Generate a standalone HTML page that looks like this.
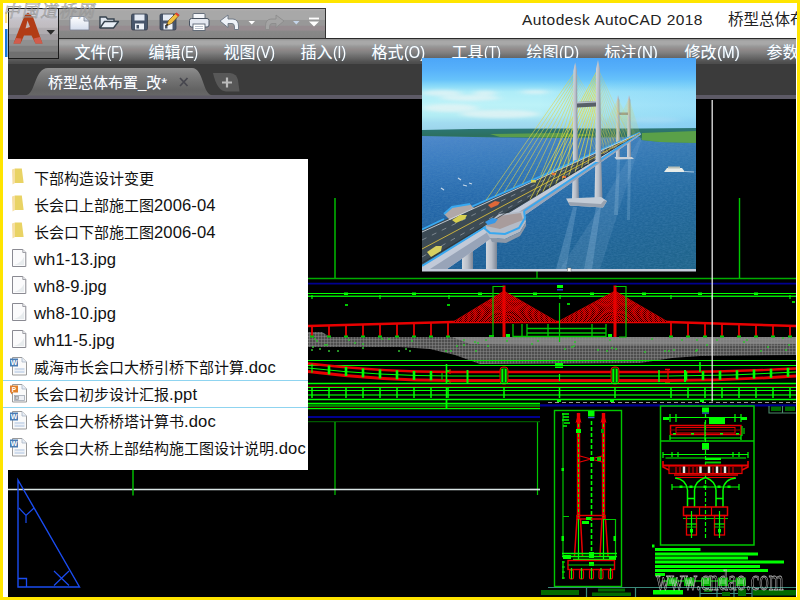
<!DOCTYPE html><html><head><meta charset="utf-8"><title>AutoCAD</title><style>
*{box-sizing:border-box}
html,body{margin:0;padding:0}
body{width:800px;height:600px;overflow:hidden;position:relative;background:#ffe500;font-family:"Liberation Sans","Noto Sans CJK SC",sans-serif;}
#win{position:absolute;left:3px;top:3px;width:794px;height:594px;background:#fff;overflow:hidden}
.abs{position:absolute}
#black{left:5px;top:96px;width:788px;height:498px;background:#000}
#tabbar{left:5px;top:61px;width:788px;height:31px;background:#3b3b3b}
#tabstrip{left:5px;top:92px;width:788px;height:4px;background:#5d5a66}
#menubar{left:5px;top:35px;width:788px;height:26px;background:linear-gradient(#909090 0,#a8a8a8 8%,#a8a8a8 20%,#989898 30%,#908a8a 42%,#808080 55%,#707070 67%,#606060 80%,#505050 92%,#4c4c4c 100%);border-top:1px solid #2a2a2a}
.menu{position:absolute;top:39px;color:#fff;font-size:16px;line-height:22px;white-space:nowrap;text-shadow:0 0 1px rgba(120,200,255,.6)}
#qat{left:55px;top:5px;width:268px;height:30.5px;background:linear-gradient(#b4b0b0 0,#a8a8a8 7%,#a8a8a8 36%,#989898 39%,#989898 56%,#968c90 59%,#968c90 73%,#888 76%,#848484 100%);border:1px solid #333;border-left:none}
#abtn{left:5px;top:5px;width:51px;height:51px;background:linear-gradient(#d0d0d8 0,#d0d0d8 15%,#c8c8d0 17%,#c4c0c6 25%,#c0bcc0 37%,#b0acb0 40%,#b0acb0 50%,#a09ca0 52%,#a09ca0 62%,#909090 64%,#909090 74%,#808080 76%,#808080 86%,#707070 88%,#707070 100%);border:1px solid #1c1c1c}
#title{left:519px;top:7px;font-size:15.5px;letter-spacing:.45px;line-height:20px;color:#222;white-space:nowrap}
#title2{left:725px;top:7px;font-size:15.5px;line-height:20px;color:#222;white-space:nowrap}
#panel{left:0px;top:156px;width:305px;height:311px;background:#fff}
.row{position:absolute;left:31px;font-size:15px;line-height:20px;color:#111;white-space:nowrap}
span.ml{display:inline-block;transform:scaleX(.82);transform-origin:0 50%}
span.rl{font-size:16.6px;letter-spacing:.1px}
#sel{left:0;top:377px;width:305px;height:28px;border-top:1px solid #8fd4f0;border-bottom:1px solid #8fd4f0}
</style></head><body>
<div id="win">
<div class="abs" id="black"></div>
<div class="abs" id="tabbar"></div><div class="abs" id="tabstrip"></div>
<div class="abs" id="menubar"></div>
<div class="menu" style="left:71.5px">文件<span class="ml" style="transform:scaleX(0.8)">(F)</span></div>
<div class="menu" style="left:145.5px">编辑<span class="ml" style="transform:scaleX(0.8)">(E)</span></div>
<div class="menu" style="left:220.5px">视图<span class="ml" style="transform:scaleX(0.89)">(V)</span></div>
<div class="menu" style="left:297.5px">插入<span class="ml" style="transform:scaleX(0.86)">(I)</span></div>
<div class="menu" style="left:368.5px">格式<span class="ml" style="transform:scaleX(0.91)">(O)</span></div>
<div class="menu" style="left:448.5px">工具<span class="ml" style="transform:scaleX(0.83)">(T)</span></div>
<div class="menu" style="left:523.5px">绘图<span class="ml" style="transform:scaleX(0.9)">(D)</span></div>
<div class="menu" style="left:601.5px">标注<span class="ml" style="transform:scaleX(0.94)">(N)</span></div>
<div class="menu" style="left:681.5px">修改<span class="ml" style="transform:scaleX(0.95)">(M)</span></div>
<div class="menu" style="left:763.5px">参数</div>
<div class="abs" id="qat"></div>
<div class="abs" id="abtn"></div>
<div class="abs" id="title">Autodesk AutoCAD 2018</div><div class="abs" id="title2">桥型总体布置</div>
<svg class="abs" style="left:-3px;top:-3px" width="800" height="600" viewBox="0 0 800 600" fill="none">
<defs><pattern id="hatch" width="3" height="3" patternUnits="userSpaceOnUse"><rect width="3" height="3" fill="#4e4e4e"/><path d="M0 0h3M0 0v3" stroke="#8a8a8a" stroke-width="1"/></pattern><pattern id="fan" width="2" height="2" patternUnits="userSpaceOnUse"><rect width="2" height="2" fill="#1a0000"/><path d="M0 2L2 0" stroke="#e00000" stroke-width="1"/></pattern></defs>
<path d="M308 278.5L796 278.5" stroke="#00ac00" stroke-width="1.4" />
<path d="M335 198L335 278" stroke="#00c800" stroke-width="1.4" />
<path d="M739.5 198L739.5 278" stroke="#00c800" stroke-width="1.4" />
<path d="M537 271L537 278" stroke="#00c800" stroke-width="1.2" />
<path d="M308 283.6L796 283.6" stroke="#000090" stroke-width="1.7" />
<path d="M308 293.5L796 293.5" stroke="#00ff00" stroke-width="1" />
<path d="M308 296.2L796 296.2" stroke="#00e000" stroke-width="1.6" />
<path d="M312 295L312 299" stroke="#00ff00" stroke-width="1.2" />
<path d="M380 295L380 299" stroke="#00ff00" stroke-width="1.2" />
<path d="M449 295L449 299" stroke="#00ff00" stroke-width="1.2" />
<path d="M560 295L560 299" stroke="#00ff00" stroke-width="1.2" />
<path d="M671 295L671 299" stroke="#00ff00" stroke-width="1.2" />
<path d="M712 295L712 299" stroke="#00ff00" stroke-width="1.2" />
<path d="M790 295L790 299" stroke="#00ff00" stroke-width="1.2" />
<rect x="344" y="292.5" width="4" height="2.5" fill="#00ff00" stroke="none" stroke-width="1" />
<rect x="412" y="292.5" width="4" height="2.5" fill="#00ff00" stroke="none" stroke-width="1" />
<rect x="478" y="292.5" width="4" height="2.5" fill="#00ff00" stroke="none" stroke-width="1" />
<rect x="533" y="292.5" width="4" height="2.5" fill="#00ff00" stroke="none" stroke-width="1" />
<rect x="590" y="292.5" width="4" height="2.5" fill="#00ff00" stroke="none" stroke-width="1" />
<rect x="642" y="292.5" width="4" height="2.5" fill="#00ff00" stroke="none" stroke-width="1" />
<rect x="698" y="292.5" width="4" height="2.5" fill="#00ff00" stroke="none" stroke-width="1" />
<rect x="754" y="292.5" width="4" height="2.5" fill="#00ff00" stroke="none" stroke-width="1" />
<rect x="345" y="304" width="3" height="2" fill="#00c800" stroke="none" stroke-width="1" />
<rect x="447" y="304" width="3" height="2" fill="#00c800" stroke="none" stroke-width="1" />
<rect x="567" y="303" width="3" height="2" fill="#00c800" stroke="none" stroke-width="1" />
<rect x="792" y="301" width="3" height="2" fill="#00c800" stroke="none" stroke-width="1" />
<path d="M308 332L322 332L330 337L452 337L796 337L796 355L700 356L672 358L640 363L480 364L455 355L430 349L400 347L308 347Z" fill="url(#hatch)"/>
<path d="M452 337L796 337L796 344L560 345L470 344Z" fill="#8c8c8c" opacity=".8"/>
<path d="M611 348h2M695 351h2M668 351h2M324 345h2M767 347h2M746 340h2M537 341h2M573 346h2M316 341h2M445 351h2M681 340h2M696 340h2M609 340h2M311 350h2M411 341h2M785 350h2M450 351h2M571 347h2M409 351h2M644 352h2M743 342h2M485 340h2M381 339h2M456 346h2M312 347h2M474 342h2M706 345h2M463 345h2M651 339h2M782 338h2M673 350h2M319 349h2M487 346h2M314 339h2M398 351h2M405 349h2M760 351h2M477 343h2M564 349h2M362 348h2M696 350h2M328 351h2M354 343h2M606 351h2M475 351h2M574 342h2M463 340h2M348 340h2M644 352h2M388 339h2M788 345h2M506 341h2M597 350h2M531 344h2M337 351h2M326 345h2M716 340h2M664 351h2M615 349h2M362 344h2" stroke="#30c030" stroke-width="1.3"/>
<path d="M308 326L452 322L668 322L796 326" stroke="#e80000" stroke-width="2.6"/>
<path d="M312 325.8888888888889L312 336" stroke="#e80000" stroke-width="1.8" />
<rect x="310" y="335.5" width="4" height="2" fill="#00c800" stroke="none" stroke-width="1" />
<path d="M329 325.4166666666667L329 336" stroke="#e80000" stroke-width="1.8" />
<rect x="327" y="335.5" width="4" height="2" fill="#00c800" stroke="none" stroke-width="1" />
<path d="M346 324.94444444444446L346 336" stroke="#e80000" stroke-width="1.8" />
<rect x="344" y="335.5" width="4" height="2" fill="#00c800" stroke="none" stroke-width="1" />
<path d="M363 324.47222222222223L363 336" stroke="#e80000" stroke-width="1.8" />
<rect x="361" y="335.5" width="4" height="2" fill="#00c800" stroke="none" stroke-width="1" />
<path d="M380 324L380 336" stroke="#e80000" stroke-width="1.8" />
<rect x="378" y="335.5" width="4" height="2" fill="#00c800" stroke="none" stroke-width="1" />
<path d="M397 323.52777777777777L397 336" stroke="#e80000" stroke-width="1.8" />
<rect x="395" y="335.5" width="4" height="2" fill="#00c800" stroke="none" stroke-width="1" />
<path d="M414 323.05555555555554L414 336" stroke="#e80000" stroke-width="1.8" />
<rect x="412" y="335.5" width="4" height="2" fill="#00c800" stroke="none" stroke-width="1" />
<path d="M431 322.5833333333333L431 336" stroke="#e80000" stroke-width="1.8" />
<rect x="429" y="335.5" width="4" height="2" fill="#00c800" stroke="none" stroke-width="1" />
<path d="M448 322.1111111111111L448 336" stroke="#e80000" stroke-width="1.8" />
<rect x="446" y="335.5" width="4" height="2" fill="#00c800" stroke="none" stroke-width="1" />
<path d="M671 322.09375L671 336" stroke="#e80000" stroke-width="1.8" />
<rect x="669" y="335.5" width="4" height="2" fill="#00c800" stroke="none" stroke-width="1" />
<path d="M688 322.625L688 336" stroke="#e80000" stroke-width="1.8" />
<rect x="686" y="335.5" width="4" height="2" fill="#00c800" stroke="none" stroke-width="1" />
<path d="M705 323.15625L705 336" stroke="#e80000" stroke-width="1.8" />
<rect x="703" y="335.5" width="4" height="2" fill="#00c800" stroke="none" stroke-width="1" />
<path d="M722 323.6875L722 336" stroke="#e80000" stroke-width="1.8" />
<rect x="720" y="335.5" width="4" height="2" fill="#00c800" stroke="none" stroke-width="1" />
<path d="M739 324.21875L739 336" stroke="#e80000" stroke-width="1.8" />
<rect x="737" y="335.5" width="4" height="2" fill="#00c800" stroke="none" stroke-width="1" />
<path d="M756 324.75L756 336" stroke="#e80000" stroke-width="1.8" />
<rect x="754" y="335.5" width="4" height="2" fill="#00c800" stroke="none" stroke-width="1" />
<path d="M773 325.28125L773 336" stroke="#e80000" stroke-width="1.8" />
<rect x="771" y="335.5" width="4" height="2" fill="#00c800" stroke="none" stroke-width="1" />
<path d="M790 325.8125L790 336" stroke="#e80000" stroke-width="1.8" />
<rect x="788" y="335.5" width="4" height="2" fill="#00c800" stroke="none" stroke-width="1" />
<path d="M504 291L453 322L557.5 322Z" fill="url(#fan)"/>
<path d="M504 291L453 322" stroke="#e80000" stroke-width="0.7" />
<path d="M504 291L557.5 322" stroke="#e80000" stroke-width="0.7" />
<path d="M504 292L456.3878571428571 322" stroke="#e80000" stroke-width="0.7" />
<path d="M504 292L553.9460714285714 322" stroke="#e80000" stroke-width="0.7" />
<path d="M504 293L459.7757142857143 322" stroke="#e80000" stroke-width="0.7" />
<path d="M504 293L550.3921428571429 322" stroke="#e80000" stroke-width="0.7" />
<path d="M504 294L463.16357142857146 322" stroke="#e80000" stroke-width="0.7" />
<path d="M504 294L546.8382142857142 322" stroke="#e80000" stroke-width="0.7" />
<path d="M504 295L466.5514285714286 322" stroke="#e80000" stroke-width="0.7" />
<path d="M504 295L543.2842857142857 322" stroke="#e80000" stroke-width="0.7" />
<path d="M504 296L469.9392857142857 322" stroke="#e80000" stroke-width="0.7" />
<path d="M504 296L539.7303571428571 322" stroke="#e80000" stroke-width="0.7" />
<path d="M504 297L473.32714285714286 322" stroke="#e80000" stroke-width="0.7" />
<path d="M504 297L536.1764285714286 322" stroke="#e80000" stroke-width="0.7" />
<path d="M504 298L476.715 322" stroke="#e80000" stroke-width="0.7" />
<path d="M504 298L532.6225 322" stroke="#e80000" stroke-width="0.7" />
<path d="M504 299L480.10285714285715 322" stroke="#e80000" stroke-width="0.7" />
<path d="M504 299L529.0685714285714 322" stroke="#e80000" stroke-width="0.7" />
<path d="M504 300L483.49071428571426 322" stroke="#e80000" stroke-width="0.7" />
<path d="M504 300L525.5146428571428 322" stroke="#e80000" stroke-width="0.7" />
<path d="M504 301L486.87857142857143 322" stroke="#e80000" stroke-width="0.7" />
<path d="M504 301L521.9607142857143 322" stroke="#e80000" stroke-width="0.7" />
<path d="M504 302L490.26642857142855 322" stroke="#e80000" stroke-width="0.7" />
<path d="M504 302L518.4067857142857 322" stroke="#e80000" stroke-width="0.7" />
<path d="M504 303L493.6542857142857 322" stroke="#e80000" stroke-width="0.7" />
<path d="M504 303L514.8528571428571 322" stroke="#e80000" stroke-width="0.7" />
<path d="M504 304L497.04214285714284 322" stroke="#e80000" stroke-width="0.7" />
<path d="M504 304L511.2989285714286 322" stroke="#e80000" stroke-width="0.7" />
<path d="M504 305L500.43 322" stroke="#e80000" stroke-width="0.7" />
<path d="M504 305L507.745 322" stroke="#e80000" stroke-width="0.7" />
<path d="M504 285.5L504 337" stroke="#e80000" stroke-width="3" />
<path d="M615 291L557.5 322L668 322Z" fill="url(#fan)"/>
<path d="M615 291L557.5 322" stroke="#e80000" stroke-width="0.7" />
<path d="M615 291L668 322" stroke="#e80000" stroke-width="0.7" />
<path d="M615 292L561.3196428571429 322" stroke="#e80000" stroke-width="0.7" />
<path d="M615 292L664.4792857142858 322" stroke="#e80000" stroke-width="0.7" />
<path d="M615 293L565.1392857142857 322" stroke="#e80000" stroke-width="0.7" />
<path d="M615 293L660.9585714285714 322" stroke="#e80000" stroke-width="0.7" />
<path d="M615 294L568.9589285714286 322" stroke="#e80000" stroke-width="0.7" />
<path d="M615 294L657.4378571428572 322" stroke="#e80000" stroke-width="0.7" />
<path d="M615 295L572.7785714285715 322" stroke="#e80000" stroke-width="0.7" />
<path d="M615 295L653.9171428571428 322" stroke="#e80000" stroke-width="0.7" />
<path d="M615 296L576.5982142857143 322" stroke="#e80000" stroke-width="0.7" />
<path d="M615 296L650.3964285714286 322" stroke="#e80000" stroke-width="0.7" />
<path d="M615 297L580.4178571428572 322" stroke="#e80000" stroke-width="0.7" />
<path d="M615 297L646.8757142857143 322" stroke="#e80000" stroke-width="0.7" />
<path d="M615 298L584.2375 322" stroke="#e80000" stroke-width="0.7" />
<path d="M615 298L643.355 322" stroke="#e80000" stroke-width="0.7" />
<path d="M615 299L588.0571428571428 322" stroke="#e80000" stroke-width="0.7" />
<path d="M615 299L639.8342857142857 322" stroke="#e80000" stroke-width="0.7" />
<path d="M615 300L591.8767857142857 322" stroke="#e80000" stroke-width="0.7" />
<path d="M615 300L636.3135714285714 322" stroke="#e80000" stroke-width="0.7" />
<path d="M615 301L595.6964285714286 322" stroke="#e80000" stroke-width="0.7" />
<path d="M615 301L632.7928571428571 322" stroke="#e80000" stroke-width="0.7" />
<path d="M615 302L599.5160714285714 322" stroke="#e80000" stroke-width="0.7" />
<path d="M615 302L629.2721428571429 322" stroke="#e80000" stroke-width="0.7" />
<path d="M615 303L603.3357142857143 322" stroke="#e80000" stroke-width="0.7" />
<path d="M615 303L625.7514285714286 322" stroke="#e80000" stroke-width="0.7" />
<path d="M615 304L607.1553571428572 322" stroke="#e80000" stroke-width="0.7" />
<path d="M615 304L622.2307142857143 322" stroke="#e80000" stroke-width="0.7" />
<path d="M615 305L610.975 322" stroke="#e80000" stroke-width="0.7" />
<path d="M615 305L618.71 322" stroke="#e80000" stroke-width="0.7" />
<path d="M615 285.5L615 337" stroke="#e80000" stroke-width="3" />
<path d="M504 286.5L493 286.5L493 337" stroke="#00c800" stroke-width="1.2"/>
<path d="M615 286.5L626 286.5L626 337L619 337" stroke="#00c800" stroke-width="1.2"/>
<rect x="489" y="335" width="5" height="2" fill="#00c800" stroke="none" stroke-width="1" />
<rect x="506" y="334" width="4" height="3" fill="#00ff00" stroke="none" stroke-width="1" />
<rect x="608" y="334" width="4" height="3" fill="#00ff00" stroke="none" stroke-width="1" />
<path d="M513 324L513 336.5L606 336.5L606 324M522 324v12M527 324v12M548 324v12M592 324v12M527 328.5H606M527 333H606" stroke="#00c800" stroke-width="1.3"/>
<path d="M559.5 303L559.5 342" stroke="#00c800" stroke-width="1.2" />
<rect x="557" y="285" width="6" height="3" fill="#00ff00" stroke="none" stroke-width="1" />
<rect x="557" y="289" width="6" height="1.5" fill="#2040c0" stroke="none" stroke-width="1" />
<path d="M308 360.5L796 360.5" stroke="#00ff00" stroke-width="1.2" />
<path d="M308 365.5L796 365.5" stroke="#00ff00" stroke-width="1.2" />
<path d="M308 363.5Q380 372 452 372L668 372Q732 372 796 368.5" stroke="#e80000" stroke-width="2.4"/>
<path d="M308 371.5Q380 380.5 452 380.5L668 380.5Q732 380.5 796 376" stroke="#e80000" stroke-width="2.8"/>
<path d="M308 368Q380 376 452 376L668 376Q732 376 796 372" stroke="#00ff00" stroke-width="1"/>
<path d="M312 363.65470679012344L312 372.65470679012344" stroke="#00ff00" stroke-width="1.2" />
<path d="M329 365.4443142361111L329 374.4443142361111" stroke="#00ff00" stroke-width="2.6" />
<path d="M346 367.00256558641973L346 376.00256558641973" stroke="#00ff00" stroke-width="2.6" />
<path d="M363 368.32946084104935L363 377.32946084104935" stroke="#00ff00" stroke-width="2.6" />
<path d="M380 369.425L380 378.425" stroke="#00ff00" stroke-width="2.6" />
<path d="M397 370.2891830632716L397 379.2891830632716" stroke="#00ff00" stroke-width="2.6" />
<path d="M414 370.9220100308642L414 379.9220100308642" stroke="#00ff00" stroke-width="2.6" />
<path d="M431 371.32348090277776L431 380.32348090277776" stroke="#00ff00" stroke-width="2.6" />
<path d="M686 371.416943359375L686 380.416943359375" stroke="#00ff00" stroke-width="2.6" />
<path d="M703 371.18597412109375L703 380.18597412109375" stroke="#00ff00" stroke-width="2.6" />
<path d="M720 370.8068359375L720 379.8068359375" stroke="#00ff00" stroke-width="2.6" />
<path d="M737 370.27952880859374L737 379.27952880859374" stroke="#00ff00" stroke-width="2.6" />
<path d="M754 369.604052734375L754 378.604052734375" stroke="#00ff00" stroke-width="2.6" />
<path d="M771 368.78040771484376L771 377.78040771484376" stroke="#00ff00" stroke-width="2.6" />
<path d="M788 367.80859375L788 376.80859375" stroke="#00ff00" stroke-width="2.6" />
<rect x="500" y="367" width="8" height="17" fill="#006000" stroke="#e80000" stroke-width="1" rx="3"/>
<path d="M502.3 369L502.3 382" stroke="#00ff00" stroke-width="1.6" />
<path d="M505.7 369L505.7 382" stroke="#00ff00" stroke-width="1.6" />
<rect x="611" y="367" width="8" height="17" fill="#006000" stroke="#e80000" stroke-width="1" rx="3"/>
<path d="M613.3 369L613.3 382" stroke="#00ff00" stroke-width="1.6" />
<path d="M616.7 369L616.7 382" stroke="#00ff00" stroke-width="1.6" />
<path d="M446.5 364v19M446.5 371h4M446.5 381h4" stroke="#00ff00" stroke-width="1.6"/>
<path d="M450 369v5M450 379v4" stroke="#e80000" stroke-width="1.2"/>
<path d="M668 369v13M665 369.5h5M665 382h5" stroke="#e80000" stroke-width="1.3"/>
<path d="M659 370L659 382" stroke="#00ff00" stroke-width="1.5" />
<path d="M685 370L685 382" stroke="#00ff00" stroke-width="2" />
<path d="M700 362L700 372" stroke="#00ff00" stroke-width="1.5" />
<path d="M467.5 370L467.5 383" stroke="#00ff00" stroke-width="2" />
<path d="M442 373L442 380" stroke="#00c800" stroke-width="1.2" />
<path d="M431 371L431 380" stroke="#00ff00" stroke-width="2" />
<path d="M559.5 374L559.5 381" stroke="#00ff00" stroke-width="1.2" />
<rect x="555" y="363" width="8" height="2" fill="#00ff00" stroke="none" stroke-width="1" />
<rect x="555" y="366.5" width="8" height="1.5" fill="#00ff00" stroke="none" stroke-width="1" />
<path d="M308 383.5L796 383.5" stroke="#00ff00" stroke-width="1.3" />
<path d="M308 386.3L796 386.3" stroke="#900000" stroke-width="1" />
<path d="M308 387.5L796 387.5" stroke="#00ff00" stroke-width="1" />
<path d="M308 390.5L796 390.5" stroke="#00ff00" stroke-width="1.1" />
<path d="M308 395L796 395" stroke="#00c800" stroke-width="1.5" />
<path d="M308 399.5L796 399.5" stroke="#00ff00" stroke-width="1.5" />
<path d="M308 403.5L540 403.5" stroke="#00ff00" stroke-width="1.4" />
<path d="M308 405.6L540 405.6" stroke="#008800" stroke-width="2.6" />
<path d="M308 407.4L540 407.4" stroke="#500000" stroke-width="0.8" />
<path d="M308 408.6L540 408.6" stroke="#00ff00" stroke-width="1.3" />
<path d="M312 388L312 398" stroke="#00ff00" stroke-width="1.5" />
<path d="M329 388L329 398" stroke="#00ff00" stroke-width="1.5" />
<path d="M346 388L346 398" stroke="#00ff00" stroke-width="1.5" />
<path d="M363 388L363 398" stroke="#00ff00" stroke-width="1.5" />
<path d="M380 388L380 398" stroke="#00ff00" stroke-width="1.5" />
<path d="M397 388L397 398" stroke="#00ff00" stroke-width="1.5" />
<path d="M414 388L414 398" stroke="#00ff00" stroke-width="1.5" />
<path d="M431 388L431 398" stroke="#00ff00" stroke-width="1.5" />
<path d="M448 388L448 398" stroke="#00ff00" stroke-width="1.5" />
<path d="M671 388L671 398" stroke="#00ff00" stroke-width="1.5" />
<path d="M688 388L688 398" stroke="#00ff00" stroke-width="1.5" />
<path d="M705 388L705 398" stroke="#00ff00" stroke-width="1.5" />
<path d="M722 388L722 398" stroke="#00ff00" stroke-width="1.5" />
<path d="M739 388L739 398" stroke="#00ff00" stroke-width="1.5" />
<path d="M756 388L756 398" stroke="#00ff00" stroke-width="1.5" />
<path d="M773 388L773 398" stroke="#00ff00" stroke-width="1.5" />
<path d="M790 388L790 398" stroke="#00ff00" stroke-width="1.5" />
<path d="M446.5 388L446.5 398" stroke="#00ff00" stroke-width="1.5" />
<path d="M504 388L504 398" stroke="#00ff00" stroke-width="1.5" />
<path d="M559.5 388L559.5 398" stroke="#00ff00" stroke-width="1.5" />
<path d="M615 388L615 398" stroke="#00ff00" stroke-width="1.5" />
<path d="M446.5 399L446.5 408" stroke="#00ff00" stroke-width="1.8" />
<path d="M308 417L540 417" stroke="#000090" stroke-width="2" />
<path d="M540 405.3L796 405.3" stroke="#000090" stroke-width="2.2" />
<path d="M548 402.5H796" stroke="#9a9a9a" stroke-width="1" stroke-dasharray="4 3"/>
<path d="M537.5 422L537.5 495" stroke="#00c800" stroke-width="1.2" />
<path d="M308 421.6L540 421.6" stroke="#005800" stroke-width="1.2" />
<path d="M335 422L335 495" stroke="#00c800" stroke-width="1.2" />
<path d="M530 489.5L540 489.5" stroke="#e8e8e8" stroke-width="1.2" />
<rect x="554.5" y="410.5" width="67" height="176" fill="none" stroke="#00c800" stroke-width="1.4" />
<path d="M563 413L563 557" stroke="#00c800" stroke-width="1.2" />
<path d="M562 414h7M563 417h6M562 420h7M564 423h6M563 426h4" stroke="#00ff00" stroke-width="1.4"/>
<rect x="561.5" y="468" width="2.5" height="3" fill="#00ff00" stroke="none" stroke-width="1" />
<rect x="561.5" y="536" width="2.5" height="5" fill="#00ff00" stroke="none" stroke-width="1" />
<path d="M563 516.5L569 516.5" stroke="#00c800" stroke-width="1" />
<rect x="588" y="411" width="6.5" height="5.5" fill="#00ff00" stroke="none" stroke-width="1" />
<rect x="588" y="417" width="6.5" height="1.2" fill="#3060d0" stroke="none" stroke-width="1" />
<path d="M578.5 412.5L575.5 423L578.5 421L581.5 423Z" fill="#e80000"/>
<path d="M578.5 413L578.5 519" stroke="#e80000" stroke-width="3.4" />
<path d="M578.5 424V519" stroke="#00ff00" stroke-width="1" stroke-dasharray="3 2"/>
<path d="M603.5 412.5L600.5 423L603.5 421L606.5 423Z" fill="#e80000"/>
<path d="M603.5 413L603.5 519" stroke="#e80000" stroke-width="3.4" />
<path d="M603.5 424V519" stroke="#00ff00" stroke-width="1" stroke-dasharray="3 2"/>
<rect x="576" y="429" width="5" height="4" fill="#00ff00" stroke="none" stroke-width="1" />
<rect x="601" y="429" width="3" height="4" fill="#009a00" stroke="none" stroke-width="1" />
<path d="M580 456L602 462M580 462L602 456" stroke="#e80000" stroke-width="1.2"/>
<rect x="590" y="457" width="4" height="4" fill="#00ff00" stroke="none" stroke-width="1" />
<rect x="597" y="457" width="4" height="4" fill="#00c800" stroke="none" stroke-width="1" />
<path d="M591.5 421V556" stroke="#00ff00" stroke-width="1.6" stroke-dasharray="4 2"/>
<rect x="577" y="515.5" width="28" height="3.5" fill="none" stroke="#e80000" stroke-width="1.4" />
<path d="M577 519L574.5 556M580.5 519L582.5 556M602 519L600 556M605.5 519L608 556" stroke="#e80000" stroke-width="1.5"/>
<path d="M578.5 519V560M603.5 519V560" stroke="#00ff00" stroke-width="1.2"/>
<path d="M604 519.5H615.5V557" stroke="#00c800" stroke-width="1.2"/>
<rect x="613.5" y="536" width="2.5" height="5" fill="#00ff00" stroke="none" stroke-width="1" />
<rect x="586" y="517" width="5" height="3" fill="#00ff00" stroke="none" stroke-width="1" />
<rect x="582" y="521" width="7" height="3" fill="#00ff00" stroke="none" stroke-width="1" />
<path d="M562 553.5H617M562 556.5H617M573 559.5H610" stroke="#00ff00" stroke-width="1.3"/>
<rect x="563" y="555" width="8" height="4" fill="#00ff00" stroke="none" stroke-width="1" />
<rect x="609" y="556" width="7" height="4" fill="#00ff00" stroke="none" stroke-width="1" />
<rect x="589" y="552" width="5" height="6" fill="#00ff00" stroke="none" stroke-width="1" />
<rect x="589" y="562" width="5" height="4" fill="#00ff00" stroke="none" stroke-width="1" />
<rect x="568" y="560.5" width="46.5" height="9" fill="none" stroke="#e80000" stroke-width="1.4" />
<path d="M568 565L614 565" stroke="#00c800" stroke-width="1" />
<rect x="569.5" y="570" width="4" height="9" fill="none" stroke="#e80000" stroke-width="1.2" rx="1.5"/>
<path d="M571.5 568L571.5 579" stroke="#00ff00" stroke-width="1.2" />
<rect x="579.5" y="570" width="4" height="9" fill="none" stroke="#e80000" stroke-width="1.2" rx="1.5"/>
<path d="M581.5 568L581.5 579" stroke="#00ff00" stroke-width="1.2" />
<rect x="589.5" y="570" width="4" height="9" fill="none" stroke="#e80000" stroke-width="1.2" rx="1.5"/>
<path d="M591.5 568L591.5 579" stroke="#00ff00" stroke-width="1.2" />
<rect x="599" y="570" width="4" height="9" fill="none" stroke="#e80000" stroke-width="1.2" rx="1.5"/>
<path d="M601 568L601 579" stroke="#00ff00" stroke-width="1.2" />
<rect x="608.5" y="570" width="4" height="9" fill="none" stroke="#e80000" stroke-width="1.2" rx="1.5"/>
<path d="M610.5 568L610.5 579" stroke="#00ff00" stroke-width="1.2" />
<path d="M563 561v18M562 562h3M562 567h3M562 572h3M562 578h3" stroke="#00ff00" stroke-width="1.2"/>
<rect x="660.5" y="406" width="93.5" height="139" fill="none" stroke="#00c800" stroke-width="1.5" />
<path d="M660.5 441L754 441" stroke="#00c800" stroke-width="1.5" />
<path d="M705.5 414V540" stroke="#00ff00" stroke-width="1.2" stroke-dasharray="4 2"/>
<rect x="702" y="407.5" width="7" height="5" fill="#00ff00" stroke="none" stroke-width="1" />
<rect x="702" y="412.5" width="7" height="1.2" fill="#3060d0" stroke="none" stroke-width="1" />
<rect x="702" y="443" width="7" height="6" fill="#00ff00" stroke="none" stroke-width="1" />
<rect x="702" y="449" width="7" height="1" fill="#608060" stroke="none" stroke-width="1" />
<path d="M663 417.5H747M670 414v8M676 414v8M735 414v8M741 414v8" stroke="#00ff00" stroke-width="1.2"/>
<rect x="663" y="417" width="6" height="3" fill="#00ff00" stroke="none" stroke-width="1" />
<rect x="741" y="417" width="6" height="3" fill="#00ff00" stroke="none" stroke-width="1" />
<rect x="709" y="417" width="16" height="7" fill="#00ff00" stroke="none" stroke-width="1" />
<rect x="670.5" y="425.5" width="70.5" height="9" fill="none" stroke="#e80000" stroke-width="1.5" />
<rect x="676" y="427.5" width="59" height="5.5" fill="none" stroke="#e80000" stroke-width="1" />
<path d="M670 430L741 430" stroke="#900000" stroke-width="1" />
<path d="M670 438H741M670 435v5M741 435v5M705 422v18" stroke="#00ff00" stroke-width="1.2"/>
<path d="M742 426v10M744 428v6" stroke="#00ff00" stroke-width="1"/>
<rect x="673" y="433" width="3" height="1.6" fill="#00ff00" stroke="none" stroke-width="1" />
<rect x="691" y="433" width="3" height="1.6" fill="#00ff00" stroke="none" stroke-width="1" />
<rect x="720" y="433" width="3" height="1.6" fill="#00ff00" stroke="none" stroke-width="1" />
<rect x="736" y="433" width="3" height="1.6" fill="#00ff00" stroke="none" stroke-width="1" />
<path d="M663 454.5H748M665.5 458H746M663 452v6M748 452v6M672 452v5M678 452v5M733 452v5M739 452v5" stroke="#00ff00" stroke-width="1.2"/>
<rect x="705" y="458" width="16" height="2" fill="#00ff00" stroke="none" stroke-width="1" />
<rect x="705" y="461.5" width="16" height="2" fill="#00c800" stroke="none" stroke-width="1" />
<path d="M663 461V467L669 470M748 461V467L742 470" stroke="#e80000" stroke-width="1.6"/>
<path d="M663 465.5L748 465.5" stroke="#e80000" stroke-width="2.2" />
<rect x="669" y="466" width="73" height="7.5" fill="#200000" stroke="#e80000" stroke-width="1.2" />
<path d="M676 467L676 473" stroke="#e80000" stroke-width="1" />
<path d="M680 467L680 473" stroke="#e80000" stroke-width="1" />
<path d="M689 467L689 473" stroke="#e80000" stroke-width="1" />
<path d="M693 467L693 473" stroke="#e80000" stroke-width="1" />
<path d="M697 467L697 473" stroke="#e80000" stroke-width="1" />
<path d="M709 467L709 473" stroke="#e80000" stroke-width="1" />
<path d="M713 467L713 473" stroke="#e80000" stroke-width="1" />
<path d="M721 467L721 473" stroke="#e80000" stroke-width="1" />
<path d="M729 467L729 473" stroke="#e80000" stroke-width="1" />
<path d="M733 467L733 473" stroke="#e80000" stroke-width="1" />
<rect x="682.8" y="466.5" width="2.4" height="6.5" fill="#e8e8e8" stroke="none" stroke-width="1" />
<rect x="699.3" y="466.5" width="2.4" height="6.5" fill="#e8e8e8" stroke="none" stroke-width="1" />
<rect x="707.8" y="466.5" width="2.4" height="6.5" fill="#e8e8e8" stroke="none" stroke-width="1" />
<rect x="715.8" y="466.5" width="2.4" height="6.5" fill="#e8e8e8" stroke="none" stroke-width="1" />
<rect x="723.8" y="466.5" width="2.4" height="6.5" fill="#e8e8e8" stroke="none" stroke-width="1" />
<path d="M674 475L738 475" stroke="#e80000" stroke-width="1.4" />
<path d="M676 477.5L735 477.5" stroke="#e80000" stroke-width="1.2" />
<path d="M675 478Q686 479 687.5 490M736 478Q724 479 723 490M694.5 490Q695 481 705.5 477.5Q715.5 481 716 490" stroke="#00ff00" stroke-width="1.4"/>
<path d="M672 487H739M672 484v6M739 484v6" stroke="#00ff00" stroke-width="1.2"/>
<rect x="679.5" y="485.5" width="3" height="2.5" fill="#00ff00" stroke="none" stroke-width="1" />
<rect x="689.5" y="485.5" width="3" height="2.5" fill="#00ff00" stroke="none" stroke-width="1" />
<rect x="703.5" y="485.5" width="3" height="2.5" fill="#00ff00" stroke="none" stroke-width="1" />
<rect x="717.5" y="485.5" width="3" height="2.5" fill="#00ff00" stroke="none" stroke-width="1" />
<rect x="727.5" y="485.5" width="3" height="2.5" fill="#00ff00" stroke="none" stroke-width="1" />
<path d="M687.5 490V507M694.5 490V507M716 490V507M723 490V507M687.5 498.5H694.5M716 498.5H723" stroke="#00ff00" stroke-width="1.5"/>
<rect x="683.5" y="507" width="44" height="8.5" fill="none" stroke="#e80000" stroke-width="1.5" />
<path d="M699.5 507L699.5 515.5" stroke="#e80000" stroke-width="1.2" />
<path d="M711.5 507L711.5 515.5" stroke="#e80000" stroke-width="1.2" />
<path d="M683 518.5L728 518.5" stroke="#00c800" stroke-width="1.2" />
<rect x="686.5" y="515.5" width="10" height="19.5" fill="none" stroke="#e80000" stroke-width="1.3" />
<path d="M691.5 511L691.5 538" stroke="#00ff00" stroke-width="1.2" />
<path d="M686.5 524L696.5 524" stroke="#00ff00" stroke-width="1.2" />
<path d="M686.5 527L696.5 527" stroke="#00c800" stroke-width="1" />
<rect x="690" y="529" width="3" height="3.5" fill="#00ff00" stroke="none" stroke-width="1" />
<rect x="714.5" y="515.5" width="10" height="19.5" fill="none" stroke="#e80000" stroke-width="1.3" />
<path d="M719.5 511L719.5 538" stroke="#00ff00" stroke-width="1.2" />
<path d="M714.5 524L724.5 524" stroke="#00ff00" stroke-width="1.2" />
<path d="M714.5 527L724.5 527" stroke="#00c800" stroke-width="1" />
<rect x="718" y="529" width="3" height="3.5" fill="#00ff00" stroke="none" stroke-width="1" />
<rect x="655" y="548" width="45.5" height="3" fill="#00ff00" stroke="none" stroke-width="1" />
<rect x="655" y="552.5" width="103" height="3" fill="#00ff00" stroke="none" stroke-width="1" />
<rect x="655" y="556.5" width="93" height="3" fill="#00ff00" stroke="none" stroke-width="1" />
<rect x="655" y="560.5" width="129" height="3" fill="#00ff00" stroke="none" stroke-width="1" />
<rect x="655" y="565" width="105" height="3" fill="#00ff00" stroke="none" stroke-width="1" />
<rect x="655" y="569" width="113" height="3" fill="#00ff00" stroke="none" stroke-width="1" />
<rect x="655" y="573" width="10" height="3" fill="#00ff00" stroke="none" stroke-width="1" />
<rect x="652" y="544.5" width="2.5" height="3" fill="#00ff00" stroke="none" stroke-width="1" />
<rect x="663" y="580.3" width="83" height="1.4" fill="#00c800" stroke="none" stroke-width="1" />
<rect x="667" y="577.5" width="10" height="8.5" fill="#00b000" stroke="none" stroke-width="1" />
<rect x="669" y="579.5" width="6" height="4.5" fill="#40d040" stroke="none" stroke-width="1" />
<rect x="684" y="577.5" width="10" height="8.5" fill="#00b000" stroke="none" stroke-width="1" />
<rect x="686" y="579.5" width="6" height="4.5" fill="#40d040" stroke="none" stroke-width="1" />
<rect x="701" y="577.5" width="10" height="8.5" fill="#00b000" stroke="none" stroke-width="1" />
<rect x="703" y="579.5" width="6" height="4.5" fill="#40d040" stroke="none" stroke-width="1" />
<rect x="718" y="577.5" width="10" height="8.5" fill="#00b000" stroke="none" stroke-width="1" />
<rect x="720" y="579.5" width="6" height="4.5" fill="#40d040" stroke="none" stroke-width="1" />
<rect x="736" y="577.5" width="10" height="8.5" fill="#00b000" stroke="none" stroke-width="1" />
<rect x="738" y="579.5" width="6" height="4.5" fill="#40d040" stroke="none" stroke-width="1" />
<rect x="653" y="590" width="30" height="4.5" fill="#00ff00" stroke="none" stroke-width="1" />
<path d="M548 587.5H796M586.5 587.5V597M635.5 587.5V597M700 587.5V597M717 587.5V597M734 587.5V597M752 587.5V597M700 593.5H752" stroke="#3a8a7a" stroke-width="1.2"/>
<rect x="541" y="590" width="38" height="5" fill="#006a00" stroke="none" stroke-width="1" />
<rect x="592" y="592.5" width="39" height="3.5" fill="#006a00" stroke="none" stroke-width="1" />
<rect x="598" y="588.5" width="27" height="3" fill="#006a00" stroke="none" stroke-width="1" />
<rect x="753" y="590" width="43" height="5.5" fill="#006a00" stroke="none" stroke-width="1" />
<rect x="704" y="589" width="8" height="3" fill="#006a00" stroke="none" stroke-width="1" />
<rect x="722" y="592" width="8" height="4" fill="#006a00" stroke="none" stroke-width="1" />
<rect x="738" y="589" width="8" height="7" fill="#006a00" stroke="none" stroke-width="1" />
<path d="M769 406V413H796M782.5 406V413" stroke="#4a8a6a" stroke-width="1.1"/>
<rect x="771" y="406.5" width="10" height="4.5" fill="#006a00" stroke="none" stroke-width="1" />
<rect x="785" y="406.5" width="10" height="4.5" fill="#006a00" stroke="none" stroke-width="1" />
<rect x="557" y="399" width="4" height="3" fill="#00ff00" stroke="none" stroke-width="1" />
<rect x="610" y="399" width="4" height="3" fill="#00ff00" stroke="none" stroke-width="1" />
<rect x="700" y="399" width="4" height="3" fill="#00ff00" stroke="none" stroke-width="1" />
<path d="M8 489.5L540 489.5" stroke="#d8e4e4" stroke-width="1.4" />
<path d="M712.2 100L712.2 401.5" stroke="#e8e8e8" stroke-width="1.3" />
<path d="M133 469L133 495.5" stroke="#00c800" stroke-width="1.4" />
<path d="M18 480V587H79.5Z" stroke="#1a4cf0" stroke-width="1.4"/>
<path d="M18 578.5H26.5V587" stroke="#1a4cf0" stroke-width="1.3"/>
<path d="M19 508L26 515.5L34 508M26 515.5V523" stroke="#1a4cf0" stroke-width="1.2"/>
<path d="M54 571L69 585.5M54 585.5L69 571" stroke="#1a4cf0" stroke-width="1.2"/>
</svg>
<svg class="abs" style="left:419px;top:55px" width="274" height="213.5" viewBox="422 58 274 213.5">
<defs>
<linearGradient id="sky" x1="0" y1="0" x2="0" y2="1">
<stop offset="0" stop-color="#4ca6f8"/><stop offset=".15" stop-color="#56b0fa"/><stop offset=".3" stop-color="#66c2fa"/><stop offset=".38" stop-color="#86d8f8"/><stop offset=".47" stop-color="#aeecf8"/><stop offset=".65" stop-color="#bcf2f8"/><stop offset=".8" stop-color="#b2ecf4"/><stop offset=".9" stop-color="#a2dcf0"/><stop offset="1" stop-color="#9cd4ec"/></linearGradient>
<linearGradient id="water" x1="0" y1="0" x2="0" y2="1">
<stop offset="0" stop-color="#4e88cc"/><stop offset=".2" stop-color="#3c7cc2"/><stop offset=".5" stop-color="#2464ac"/><stop offset="1" stop-color="#154e90"/></linearGradient>
<linearGradient id="waterR" x1="0" y1="0" x2="1" y2="1">
<stop offset="0" stop-color="#2a78b0" stop-opacity="0"/><stop offset="1" stop-color="#1f6688" stop-opacity=".9"/></linearGradient>
<linearGradient id="skyR" x1="0" y1="0" x2="1" y2="0"><stop offset="0" stop-color="#6cc4fa" stop-opacity="0"/><stop offset=".5" stop-color="#6cc4fa" stop-opacity=".3"/><stop offset="1" stop-color="#6cc4fa" stop-opacity=".42"/></linearGradient>
<linearGradient id="land" x1="0" y1="0" x2="0" y2="1">
<stop offset="0" stop-color="#2c7676"/><stop offset=".5" stop-color="#2c7060"/><stop offset="1" stop-color="#3a8468"/></linearGradient>
<linearGradient id="col" x1="0" y1="0" x2="1" y2="0">
<stop offset="0" stop-color="#d4d8de"/><stop offset=".5" stop-color="#b8bec8"/><stop offset="1" stop-color="#7c8696"/></linearGradient>
<filter id="wn" x="0" y="0" width="100%" height="100%"><feTurbulence type="fractalNoise" baseFrequency=".35 .9" numOctaves="2" seed="4"/><feColorMatrix values="0 0 0 0 .1  0 0 0 0 .3  0 0 0 0 .55  0 0 0 .9 -.25"/></filter>
<filter id="cl" x="-20%" y="-80%" width="140%" height="260%"><feGaussianBlur stdDeviation="4 1.6"/></filter>
</defs>
<rect x="422" y="58" width="274" height="72" fill="url(#sky)"/>
<g filter="url(#cl)" fill="#eaf4f4" opacity=".7"><ellipse cx="442" cy="93" rx="20" ry="3"/><ellipse cx="470" cy="98" rx="30" ry="3"/><ellipse cx="485" cy="93" rx="12" ry="2.5"/><ellipse cx="450" cy="108" rx="28" ry="4"/><ellipse cx="500" cy="114" rx="40" ry="4"/><ellipse cx="535" cy="92" rx="14" ry="2"/><ellipse cx="655" cy="120" rx="26" ry="3" opacity=".5"/></g>
<rect x="540" y="80" width="156" height="50" fill="url(#skyR)"/>
<rect x="422" y="136" width="274" height="133" fill="url(#water)"/>
<rect x="422" y="136" width="274" height="133" fill="url(#waterR)"/>
<rect x="422" y="136" width="274" height="133" filter="url(#wn)" opacity=".55"/>
<path d="M422 130L470 129L560 128.5L640 128.5L696 128L696 143L660 142L641 140L640 137L560 138L500 137.5L422 136Z" fill="url(#land)"/>
<path d="M642 133L696 131L696 143L660 142L642 140Z" fill="#5aa048"/>
<path d="M490 134L560 133L600 135L560 137.5L500 137Z" fill="#5a9c4c"/>
<path d="M573 207L577 207L566 269L556 269Z M596 207L601 207L592 269L584 269Z" fill="#b8d8f0" opacity=".22"/>
<path d="M640 138L600 207L560 269L600 269L622 200L642 138Z" fill="#a8c8e8" opacity=".13"/>
<path d="M617 159L620 159L618 215L614 215ZM628 159L631 159L630 220L627 220Z" fill="#c0dcf0" opacity=".2"/>
<path d="M616.7 100L618 95L619.3 100L620 157L616 157Z" fill="url(#col)"/>
<path d="M627.7 100L629 95L630.3 100L631 157L627 157Z" fill="url(#col)"/>
<rect x="619" y="112.5" width="9" height="2.5" fill="#8a929c"/>
<path d="M614.5 157L632 157L634 159L616 159.5Z" fill="#c8d0d8"/>
<path d="M618 99L592 154M629 99L604 151.5" stroke="#d8d050" stroke-width=".5" opacity=".45"/>
<path d="M618 99L636 136M629 99L640 134.5" stroke="#d8d050" stroke-width=".5" opacity=".35"/>
<path d="M618 101L595.5 151.8M629 101L607.2 149.5" stroke="#d8d050" stroke-width=".5" opacity=".45"/>
<path d="M618 101L634.5 135.7M629 101L638.8 134.5" stroke="#d8d050" stroke-width=".5" opacity=".35"/>
<path d="M618 103L599 149.6M629 103L610.4 147.5" stroke="#d8d050" stroke-width=".5" opacity=".45"/>
<path d="M618 103L633 135.4M629 103L637.6 134.5" stroke="#d8d050" stroke-width=".5" opacity=".35"/>
<path d="M618 105L602.5 147.4M629 105L613.6 145.5" stroke="#d8d050" stroke-width=".5" opacity=".45"/>
<path d="M618 105L631.5 135.1M629 105L636.4 134.5" stroke="#d8d050" stroke-width=".5" opacity=".35"/>
<path d="M618 107L606 145.2M629 107L616.8 143.5" stroke="#d8d050" stroke-width=".5" opacity=".45"/>
<path d="M618 107L630 134.8M629 107L635.2 134.5" stroke="#d8d050" stroke-width=".5" opacity=".35"/>
<path d="M618 109L609.5 143M629 109L620 141.5" stroke="#d8d050" stroke-width=".5" opacity=".45"/>
<path d="M618 109L628.5 134.5M629 109L634 134.5" stroke="#d8d050" stroke-width=".5" opacity=".35"/>
<path d="M618 111L613 140.8M629 111L623.2 139.5" stroke="#d8d050" stroke-width=".5" opacity=".45"/>
<path d="M618 111L627 134.2M629 111L632.8 134.5" stroke="#d8d050" stroke-width=".5" opacity=".35"/>
<path d="M573 150L578 150L579 199L572 199Z" fill="url(#col)"/>
<path d="M595.5 150L601 150L602.5 201L594.5 201Z" fill="url(#col)"/>
<path d="M566 198.5L601 197L607 201L603 207.5L570 205.5Z" fill="#c4ccd6"/>
<path d="M570 205.5L603 207.5L607 201L604 200.5L601 204L568 202Z" fill="#98a2b0"/>
<rect x="486" y="236" width="11" height="33" fill="url(#col)"/>
<rect x="462" y="249" width="11" height="20" fill="url(#col)"/>
<path d="M422 266L640 132.5L641 134.5L447 269L422 269Z" fill="#c2cad8"/>
<path d="M430 269L447 269L641 134.5L640.5 134Z" fill="#98a4b8"/>
<path d="M422 230L640 133L422 266Z" fill="#3c4a54"/>
<path d="M483 227L499 214L524 211L526 222L520 232L505 239L490 238Z" fill="#b4bcc8"/>
<path d="M490 238L505 239L520 232L526 222L526 226L520 236L506 243L492 242Z" fill="#8c98a8"/>
<path d="M486 226L500 216L521 213L523 220L500 229Z" fill="#a89c9c"/>
<path d="M444 214L452 207L470 204L474 208L450 220Z" fill="#b0a8a8"/>
<path d="M444 214L452 207L470 204" stroke="#38a8f0" stroke-width="2" fill="none"/>
<path d="M483 227L490 233L505 234L519 228L525 218L524 211" stroke="#38a8f0" stroke-width="2" fill="none"/>
<path d="M422 229.5L444 219M472 206.5L640 132.5" stroke="#38a8f0" stroke-width="1.8" fill="none"/>
<path d="M422 232L640 133" stroke="#dfe6ee" stroke-width=".8" fill="none"/>
<path d="M422 266L486 226.5M524 211L640 133" stroke="#38a8f0" stroke-width="2" fill="none"/>
<path d="M422 263L640 133" stroke="#20282c" stroke-width="1" fill="none" opacity=".6"/>
<path d="M422 249L640 133" stroke="#c8b040" stroke-width="1" fill="none"/>
<path d="M422 240L640 133M422 257L640 133" stroke="#a8b0b8" stroke-width=".6" stroke-dasharray="5 6" fill="none"/>
<path d="M427 252L436 246L442 246L441 251L431 257Z" fill="#d8d060"/>
<path d="M452 220L460 215L467 215L465 219L456 223Z" fill="#d8d050"/>
<path d="M488 205L495 201L500 202L498 205L491 208Z" fill="#e06838"/>
<path d="M485 222L492 218L498 219L495 223L488 225Z" fill="#3898e8"/>
<rect x="531" y="180" width="5" height="2.5" fill="#d8d050"/><rect x="552" y="173" width="4" height="2" fill="#e06838"/><rect x="562" y="176" width="4" height="2" fill="#e06838"/>
<path d="M575 72L486 200.2" stroke="#e0d44a" stroke-width=".7" opacity=".85"/>
<path d="M598 69L530 199.6" stroke="#e8dc40" stroke-width=".8" opacity=".9"/>
<path d="M575 72L616 139.1" stroke="#d8cc58" stroke-width=".5" opacity=".6"/>
<path d="M598 69L630 138.1" stroke="#d8cc58" stroke-width=".5" opacity=".65"/>
<path d="M575 75.3L495.1 196.1" stroke="#e0d44a" stroke-width=".7" opacity=".85"/>
<path d="M598 72.3L536.4 195.7" stroke="#e8dc40" stroke-width=".8" opacity=".9"/>
<path d="M575 75.3L613.6 140.2" stroke="#d8cc58" stroke-width=".5" opacity=".6"/>
<path d="M598 72.3L627.1 139.9" stroke="#d8cc58" stroke-width=".5" opacity=".65"/>
<path d="M575 78.7L504.2 192" stroke="#e0d44a" stroke-width=".7" opacity=".85"/>
<path d="M598 75.7L542.9 191.7" stroke="#e8dc40" stroke-width=".8" opacity=".9"/>
<path d="M575 78.7L611.1 141.3" stroke="#d8cc58" stroke-width=".5" opacity=".6"/>
<path d="M598 75.7L624.2 141.7" stroke="#d8cc58" stroke-width=".5" opacity=".65"/>
<path d="M575 82L513.3 187.9" stroke="#e0d44a" stroke-width=".7" opacity=".85"/>
<path d="M598 79L549.3 187.7" stroke="#e8dc40" stroke-width=".8" opacity=".9"/>
<path d="M575 82L608.7 142.4" stroke="#d8cc58" stroke-width=".5" opacity=".6"/>
<path d="M598 79L621.3 143.5" stroke="#d8cc58" stroke-width=".5" opacity=".65"/>
<path d="M575 85.3L522.4 183.9" stroke="#e0d44a" stroke-width=".7" opacity=".85"/>
<path d="M598 82.3L555.8 183.8" stroke="#e8dc40" stroke-width=".8" opacity=".9"/>
<path d="M575 85.3L606.2 143.5" stroke="#d8cc58" stroke-width=".5" opacity=".6"/>
<path d="M598 82.3L618.4 145.2" stroke="#d8cc58" stroke-width=".5" opacity=".65"/>
<path d="M575 88.7L531.6 179.8" stroke="#e0d44a" stroke-width=".7" opacity=".85"/>
<path d="M598 85.7L562.2 179.8" stroke="#e8dc40" stroke-width=".8" opacity=".9"/>
<path d="M575 88.7L603.8 144.6" stroke="#d8cc58" stroke-width=".5" opacity=".6"/>
<path d="M598 85.7L615.6 147" stroke="#d8cc58" stroke-width=".5" opacity=".65"/>
<path d="M575 92L540.7 175.7" stroke="#e0d44a" stroke-width=".7" opacity=".85"/>
<path d="M598 89L568.7 175.8" stroke="#e8dc40" stroke-width=".8" opacity=".9"/>
<path d="M575 92L601.3 145.7" stroke="#d8cc58" stroke-width=".5" opacity=".6"/>
<path d="M598 89L612.7 148.8" stroke="#d8cc58" stroke-width=".5" opacity=".65"/>
<path d="M575 95.3L549.8 171.6" stroke="#e0d44a" stroke-width=".7" opacity=".85"/>
<path d="M598 92.3L575.1 171.9" stroke="#e8dc40" stroke-width=".8" opacity=".9"/>
<path d="M575 95.3L598.9 146.8" stroke="#d8cc58" stroke-width=".5" opacity=".6"/>
<path d="M598 92.3L609.8 150.6" stroke="#d8cc58" stroke-width=".5" opacity=".65"/>
<path d="M575 98.7L558.9 167.5" stroke="#e0d44a" stroke-width=".7" opacity=".85"/>
<path d="M598 95.7L581.6 167.9" stroke="#e8dc40" stroke-width=".8" opacity=".9"/>
<path d="M575 98.7L596.4 147.9" stroke="#d8cc58" stroke-width=".5" opacity=".6"/>
<path d="M598 95.7L606.9 152.3" stroke="#d8cc58" stroke-width=".5" opacity=".65"/>
<path d="M575 102L568 163.4" stroke="#e0d44a" stroke-width=".7" opacity=".85"/>
<path d="M598 99L588 164" stroke="#e8dc40" stroke-width=".8" opacity=".9"/>
<path d="M575 102L594 149" stroke="#d8cc58" stroke-width=".5" opacity=".6"/>
<path d="M598 99L604 154.1" stroke="#d8cc58" stroke-width=".5" opacity=".65"/>
<path d="M574.3 66L575.2 62.5L576.1 66L577 71L577.8 160L573 160L573.4 71Z" fill="url(#col)"/>
<path d="M597.1 64L598 60L598.9 64L600 69L601.3 162L595.5 162L596 69Z" fill="url(#col)"/>
<path d="M577 102L596 101L596 106.5L577 107.5Z" fill="#586068"/>
<path d="M577 102L596 101L596 102.5L577 103.5Z" fill="#b8c0c8"/>
<path d="M664 172L667 168L682 168L685 172Z" fill="#e8ece8"/><rect x="668" y="166.5" width="12" height="2" fill="#b8c0b8"/>
<path d="M685 171.5L694 172" stroke="#a8c8e0" stroke-width="1.2"/>
<path d="M458 178l3 2M463 185l4 1M441 188l3 2M469 183l3 1" stroke="#c8d8e8" stroke-width="1.2"/>
<rect x="422" y="269" width="274" height="2.5" fill="#c4ccdc"/>
<rect x="567.5" y="268" width="3.5" height="3.5" fill="#fff" stroke="#666" stroke-width=".5"/>
</svg>
<div class="abs" id="panel"></div><div class="abs" id="sel"></div>
<svg class="abs" style="left:8px;top:164px" width="16" height="18" viewBox="0 0 16 18"><path d="M4 1.5H10.8L12.6 16H4Z" fill="#e9d364"/><path d="M1 2.5L4 1.5V16L1.5 17.5Z" fill="#f6dfa2"/></svg>
<div class="row" style="top:166px">下部构造设计变更</div>
<svg class="abs" style="left:8px;top:191px" width="16" height="18" viewBox="0 0 16 18"><path d="M4 1.5H10.8L12.6 16H4Z" fill="#e9d364"/><path d="M1 2.5L4 1.5V16L1.5 17.5Z" fill="#f6dfa2"/></svg>
<div class="row" style="top:193px">长会口上部施工图<span class="rl">2006-04</span></div>
<svg class="abs" style="left:8px;top:218px" width="16" height="18" viewBox="0 0 16 18"><path d="M4 1.5H10.8L12.6 16H4Z" fill="#e9d364"/><path d="M1 2.5L4 1.5V16L1.5 17.5Z" fill="#f6dfa2"/></svg>
<div class="row" style="top:220px">长会口下部施工图<span class="rl">2006-04</span></div>
<svg class="abs" style="left:8px;top:245.5px" width="17" height="19" viewBox="0 0 17 19"><path d="M1.5 .500h10.3l3 3v14h-13.3z" fill="#fbfbfc" stroke="#8a8a92"/><path d="M3 16L13 16L13 8Q10 14 3 16Z" fill="#e8ecee"/><path d="M11.8 .500v3h3" fill="#eef0f4" stroke="#8a8a92" stroke-width=".8"/></svg>
<div class="row" style="top:247px"><span class="rl">wh1-13.jpg</span></div>
<svg class="abs" style="left:8px;top:272.5px" width="17" height="19" viewBox="0 0 17 19"><path d="M1.5 .500h10.3l3 3v14h-13.3z" fill="#fbfbfc" stroke="#8a8a92"/><path d="M3 16L13 16L13 8Q10 14 3 16Z" fill="#e8ecee"/><path d="M11.8 .500v3h3" fill="#eef0f4" stroke="#8a8a92" stroke-width=".8"/></svg>
<div class="row" style="top:274px"><span class="rl">wh8-9.jpg</span></div>
<svg class="abs" style="left:8px;top:299.5px" width="17" height="19" viewBox="0 0 17 19"><path d="M1.5 .500h10.3l3 3v14h-13.3z" fill="#fbfbfc" stroke="#8a8a92"/><path d="M3 16L13 16L13 8Q10 14 3 16Z" fill="#e8ecee"/><path d="M11.8 .500v3h3" fill="#eef0f4" stroke="#8a8a92" stroke-width=".8"/></svg>
<div class="row" style="top:301px"><span class="rl">wh8-10.jpg</span></div>
<svg class="abs" style="left:8px;top:326.5px" width="17" height="19" viewBox="0 0 17 19"><path d="M1.5 .500h10.3l3 3v14h-13.3z" fill="#fbfbfc" stroke="#8a8a92"/><path d="M3 16L13 16L13 8Q10 14 3 16Z" fill="#e8ecee"/><path d="M11.8 .500v3h3" fill="#eef0f4" stroke="#8a8a92" stroke-width=".8"/></svg>
<div class="row" style="top:328px"><span class="rl">wh11-5.jpg</span></div>
<svg class="abs" style="left:6px;top:352.5px" width="20" height="21" viewBox="0 0 20 21"><path d="M3.5 1.5h9.5l4.5 4.5v13h-14z" fill="#fafafa" stroke="#9a9a9a"/><path d="M13 1.5v4.5h4.5" fill="#e8eef6" stroke="#a8b4c4" stroke-width=".8"/><rect x="5.5" y="12" width="10" height="5" fill="#d0dcec"/><path d="M5.5 14.5h10" stroke="#f4f6fa" stroke-width=".8"/><rect x="1" y="2.5" width="8" height="8" fill="#4a7cb4"/><text x="5" y="9.3" font-size="7" font-weight="bold" fill="#fff" text-anchor="middle" font-family="Liberation Sans,sans-serif">W</text></svg>
<div class="row" style="top:355px">威海市长会口大桥引桥下部计算<span class="rl">.doc</span></div>
<svg class="abs" style="left:6px;top:379.5px" width="20" height="21" viewBox="0 0 20 21"><path d="M3.5 1.5h9.5l4.5 4.5v13h-14z" fill="#fafafa" stroke="#9a9a9a"/><path d="M13 1.5v4.5h4.5" fill="#e8eef6" stroke="#a8b4c4" stroke-width=".8"/><rect x="5.5" y="12.5" width="10" height="5" fill="#eef0f4" stroke="#a0a8b4" stroke-width=".8"/><rect x="6.5" y="13.5" width="3" height="3" fill="#c8ccd4" stroke="#888" stroke-width=".6"/><path d="M1 2.5h8v7h-5l-2 2v-2h-1z" fill="#e0802c"/><text x="5" y="8.6" font-size="6.5" font-weight="bold" fill="#fff" text-anchor="middle" font-family="Liberation Sans,sans-serif">P</text></svg>
<div class="row" style="top:382px">长会口初步设计汇报<span class="rl">.ppt</span></div>
<svg class="abs" style="left:6px;top:406.5px" width="20" height="21" viewBox="0 0 20 21"><path d="M3.5 1.5h9.5l4.5 4.5v13h-14z" fill="#fafafa" stroke="#9a9a9a"/><path d="M13 1.5v4.5h4.5" fill="#e8eef6" stroke="#a8b4c4" stroke-width=".8"/><rect x="5.5" y="12" width="10" height="5" fill="#d0dcec"/><path d="M5.5 14.5h10" stroke="#f4f6fa" stroke-width=".8"/><rect x="1" y="2.5" width="8" height="8" fill="#4a7cb4"/><text x="5" y="9.3" font-size="7" font-weight="bold" fill="#fff" text-anchor="middle" font-family="Liberation Sans,sans-serif">W</text></svg>
<div class="row" style="top:409px">长会口大桥桥塔计算书<span class="rl">.doc</span></div>
<svg class="abs" style="left:6px;top:433.5px" width="20" height="21" viewBox="0 0 20 21"><path d="M3.5 1.5h9.5l4.5 4.5v13h-14z" fill="#fafafa" stroke="#9a9a9a"/><path d="M13 1.5v4.5h4.5" fill="#e8eef6" stroke="#a8b4c4" stroke-width=".8"/><rect x="5.5" y="12" width="10" height="5" fill="#d0dcec"/><path d="M5.5 14.5h10" stroke="#f4f6fa" stroke-width=".8"/><rect x="1" y="2.5" width="8" height="8" fill="#4a7cb4"/><text x="5" y="9.3" font-size="7" font-weight="bold" fill="#fff" text-anchor="middle" font-family="Liberation Sans,sans-serif">W</text></svg>
<div class="row" style="top:436px">长会口大桥上部结构施工图设计说明<span class="rl">.doc</span></div>
<svg class="abs" style="left:-3px;top:-3px" width="800" height="110" viewBox="0 0 800 110">
<defs>
<linearGradient id="tabg" x1="0" y1="0" x2="0" y2="1"><stop offset="0" stop-color="#8e8e8e"/><stop offset=".2" stop-color="#808080"/><stop offset=".5" stop-color="#707070"/><stop offset=".8" stop-color="#626262"/><stop offset="1" stop-color="#666666"/></linearGradient>
<linearGradient id="pg" x1="0" y1="0" x2="0" y2="1"><stop offset="0" stop-color="#ffffff"/><stop offset="1" stop-color="#d4dcec"/></linearGradient>
</defs>
<rect x="5" y="29" width="2.5" height="28" fill="#1a78d8"/>
<rect x="5" y="12" width="2.2" height="11" fill="#ffe07a"/>
<path d="M25 95.5C36 95 34 68 48 68L192 68C204 68 202 95 213 95.5Z" fill="url(#tabg)"/>
<path d="M213 73L230 73Q237 74 238 80L239.5 91.5L226 91.5Q217 91 213 73Z" fill="#585858"/>
<path d="M222 82.5H232M227 77.5V87.5" stroke="#bcbcbc" stroke-width="2.2"/>
<path d="M180 78L187.5 86M187.5 78L180 86" stroke="#46464e" stroke-width="1.7"/>
<path d="M28 12.5L33 17L42.5 43.5L35.5 43.5L31.5 35.5L24 35.5L20.5 43.5L13.5 43.5L24.5 15.5Z" fill="#b23c16"/>
<path d="M27.5 20.5L30 27L25.5 28.5Z" fill="#c4b8b8"/>
<path d="M20.5 43.5L13.5 43.5L16 38L21.5 38.5ZM42.5 43.5L35.5 43.5L33.5 38.5L40 37Z" fill="#d8645a" opacity=".8"/>
<path d="M46.5 30L55 30L50.8 34.8Z" fill="#2c2c2c"/>
<path d="M70 16.5H84L89 21V30H70Z" fill="url(#pg)" stroke="#7a8290" stroke-width=".8"/><path d="M84 16.5V21H89" fill="#c8d0dc" stroke="#7a8290" stroke-width=".8"/>
<path d="M100 28V17H106L107.5 19H114V21.5" fill="#dfe6f0" stroke="#36424e" stroke-width="1.4"/>
<path d="M100 28L104.5 21.5H118.5L113.5 28Z" fill="#e8eef6" stroke="#36424e" stroke-width="1.4" stroke-linejoin="round"/>
<rect x="131.5" y="14" width="16" height="16" rx="1.5" fill="#48566c" stroke="#36404e" stroke-width=".8"/><rect x="134.5" y="14.5" width="10" height="6" fill="#e4eaf4"/><rect x="135" y="23.5" width="9" height="6" fill="#eef2f8"/><rect x="136.5" y="25" width="2.5" height="3.5" fill="#48566c"/>
<rect x="160" y="14" width="16" height="16" rx="1.5" fill="#48566c" stroke="#36404e" stroke-width=".8"/><rect x="163" y="14.5" width="10" height="6" fill="#e4eaf4"/><rect x="163.5" y="23.5" width="9" height="6" fill="#eef2f8"/><rect x="165" y="25" width="2.5" height="3.5" fill="#48566c"/>
<path d="M166 26L168.5 20.5L176 13L179 15.5L171.5 23.5Z" fill="#f0c040" stroke="#6a4a20" stroke-width=".7"/><path d="M175 14L178 16.5L179.5 15L176.5 12.5Z" fill="#e04030"/><path d="M166 26L167 23.5L168.5 25Z" fill="#222"/>
<rect x="193" y="13.5" width="12" height="6" rx="1" fill="#f4f6fa" stroke="#5a6472" stroke-width=".9"/>
<rect x="189.5" y="18.5" width="19.5" height="8.5" rx="2" fill="#e4e8f0" stroke="#4a5462" stroke-width="1"/>
<rect x="193" y="24" width="12" height="6.5" fill="#ffffff" stroke="#5a6472" stroke-width=".9"/><path d="M195 26.5H203M195 28.5H203" stroke="#9aa4b4" stroke-width=".7"/>
<path d="M220 21L228 15V19H233Q238.5 19.5 238.5 26V29.5H234.5V27Q234.5 23.5 232 23.5H228V27.5Z" fill="#eef2f8" stroke="#6a7482" stroke-width=".9" stroke-linejoin="round"/>
<path d="M248.5 21H255L251.8 24.5Z" fill="#fff"/>
<path d="M284 21L276 15V19H271Q265.5 19.5 265.5 26V29.5H269.5V27Q269.5 23.5 272 23.5H276V27.5Z" fill="#a4a4a4" stroke="#8a8a8a" stroke-width=".8" stroke-linejoin="round"/>
<path d="M293 21H299.5L296.3 24.5Z" fill="#c4d4e8"/>
<path d="M309 18.5H319" stroke="#fff" stroke-width="1.8"/><path d="M309 21.5H319L314 26.5Z" fill="#fff"/>
</svg>
<div class="abs" style="left:45px;top:70.3px;font-size:15px;line-height:20px;color:#fff;white-space:nowrap;text-shadow:0 0 1px rgba(160,200,255,.5)">桥型总体布置_改*</div>
<div class="abs" style="left:1px;top:-5px;font-family:'Liberation Serif','Noto Serif CJK SC',serif;font-size:17px;line-height:28px;color:transparent;-webkit-text-stroke:.7px rgba(150,150,150,.85);white-space:nowrap;letter-spacing:1.6px;transform:skewX(-12deg)">中国道桥网</div>
<div class="abs" style="left:653px;top:559.5px;font-family:'Liberation Serif','Noto Serif CJK SC',serif;font-size:29px;line-height:34px;color:transparent;-webkit-text-stroke:.8px rgba(190,190,190,.9);white-space:nowrap;transform-origin:0 50%;transform:scaleX(.655)">www.cndao.com</div>
</div>
</body></html>
